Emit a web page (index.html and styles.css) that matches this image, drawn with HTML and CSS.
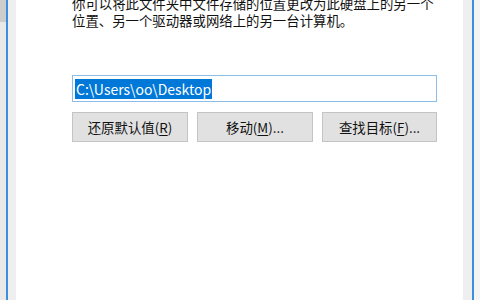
FILE: index.html
```html
<!DOCTYPE html>
<html lang="zh-CN">
<head>
<meta charset="utf-8">
<link rel="stylesheet" href="styles.css">
</head>
<body>
<div class="frame">
  <div class="edge-left"><div class="thumb"></div></div>
  <div class="line"></div>
  <div class="gutter-left"></div>
  <div class="panel">
    <p class="desc">你可以将此文件夹中文件存储的位置更改为此硬盘上的另一个<br>位置、另一个驱动器或网络上的另一台计算机。</p>
    <div class="path"><span class="sel">C:\Users\oo\Desktop</span></div>
    <div class="buttons">
      <div class="btn">还原默认值(<u>R</u>)</div>
      <div class="btn">移动(<u>M</u>)...</div>
      <div class="btn">查找目标(<u>F</u>)...</div>
    </div>
  </div>
  <div class="gutter-right"></div>
  <div class="line"></div>
  <div class="edge-right"></div>
</div>
</body>
</html>
```

FILE: styles.css
```css
html, body {
  margin: 0;
  padding: 0;
  width: 480px;
  height: 300px;
  overflow: hidden;
  background: #f0f0f0;
  font-family: "Noto Sans CJK SC", "Noto Sans", sans-serif;
}
.frame {
  display: flex;
  height: 300px;
}
.edge-left {
  width: 6px;
  background: #e9e9e9;
}
.thumb {
  height: 22px;
  background: #cdcdcd;
}
.line {
  width: 2px;
  background: #3d8edb;
}
.gutter-left {
  width: 8px;
  background: #efefef;
}
.gutter-right {
  width: 9px;
  background: #efefef;
}
.edge-right {
  width: 6px;
  background: #f4f4f4;
}
.panel {
  flex: 1;
  background: #ffffff;
  padding-left: 56px;
  display: flex;
  flex-direction: column;
}
.desc {
  margin: -5px 0 0 0;
  font-size: 13.4px;
  line-height: 16.5px;
  color: #111111;
  white-space: nowrap;
}
.path {
  margin-top: 47px;
  width: 361px;
  height: 25px;
  border: 1px solid #8cbde9;
  display: flex;
  align-items: center;
  padding-left: 2px;
  box-sizing: content-box;
}
.sel {
  background: #0078d7;
  color: #ffffff;
  font-size: 14px;
  line-height: 20px;
  padding: 0 1px;
}
.buttons {
  display: flex;
  gap: 9px;
  margin-top: 10px;
}
.btn {
  width: 114px;
  height: 28px;
  border: 1px solid #c4c4c4;
  background: #e1e1e1;
  display: flex;
  align-items: center;
  justify-content: center;
  font-size: 13.4px;
  color: #111111;
}
.btn:last-child {
  width: 113px;
}
.btn u {
  text-decoration: underline;
  text-underline-offset: 2px;
}
```
